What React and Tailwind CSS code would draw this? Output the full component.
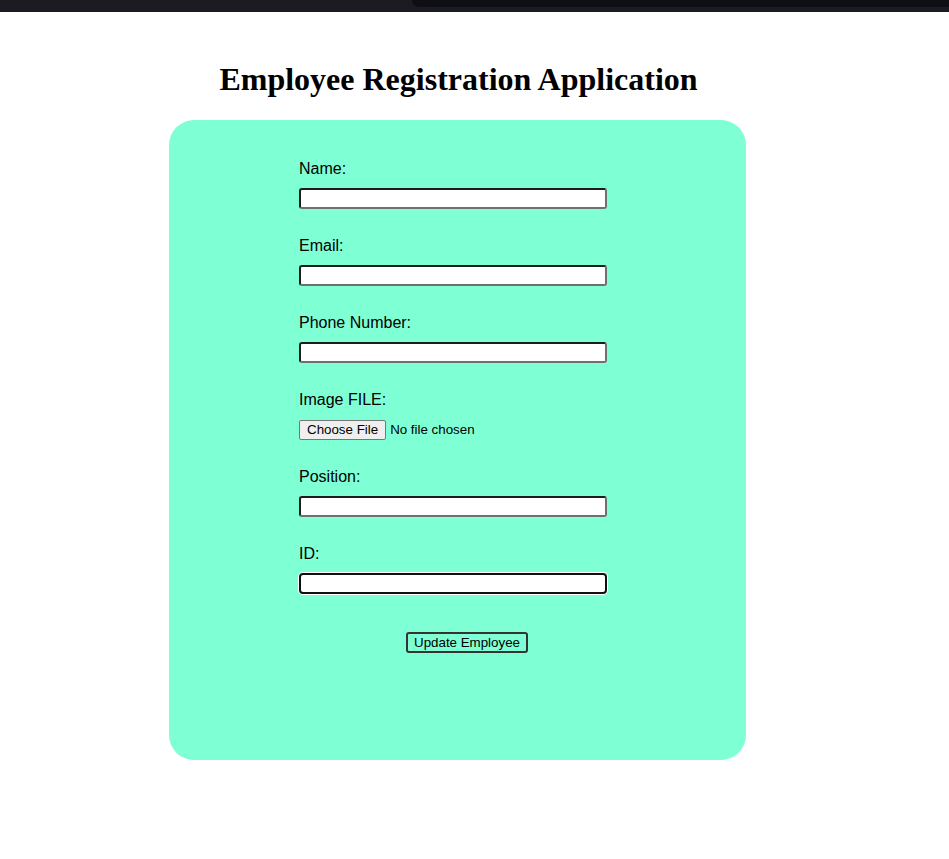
import React from 'react';

const inputBox =
  "block w-[308px] h-[21px] bg-white rounded-[3px] border-2 border-t-[#1d1d1d] border-l-[#1d1d1d] border-r-[#6f6f6f] border-b-[#6f6f6f]";

// single labelled row of the form
const Field = ({ label, children }) => (
  <div className="flex flex-col mb-[27px]">
    <label className="pt-[1px] text-[16px] leading-[18px] text-black">{label}</label>
    <div className="mt-[10px]">{children}</div>
  </div>
);

export default function App() {
  return (
    <div className="min-h-screen bg-white font-['Liberation_Sans',Arial,sans-serif]">
      {/* browser chrome strip */}
      <div className="flex h-3 bg-[#1c1b21]">
        <div className="w-[412px]"></div>
        <div className="flex-1 h-[7px] bg-[#0e0f13] rounded-bl-lg"></div>
      </div>

      <div className="ml-[169px] w-[577px]">
        <h1 className="mt-[49px] mb-[22px] pl-[2px] text-center font-['Liberation_Serif',serif] font-bold text-[32px] leading-[37px] text-black">
          Employee Registration Application
        </h1>

        <div className="h-[640px] rounded-[25px] bg-[#7fffd4] pt-[39px] pl-[130px]">
          <form className="flex flex-col" onSubmit={(e) => e.preventDefault()}>
            <Field label="Name:">
              <input type="text" className={inputBox} />
            </Field>
            <Field label="Email:">
              <input type="email" className={inputBox} />
            </Field>
            <Field label="Phone Number:">
              <input type="tel" className={inputBox} />
            </Field>
            <Field label="Image FILE:">
              <div className="flex items-center h-[21px] text-[13.33px] text-black">
                <span className="h-[20px] px-[7px] flex items-center bg-[#efefef] border border-[#767676] rounded-[2px]">
                  Choose File
                </span>
                <span className="ml-[4px]">No file chosen</span>
              </div>
            </Field>
            <Field label="Position:">
              <input type="text" className={inputBox} />
            </Field>
            <Field label="ID:">
              <input
                type="text"
                className="block w-[308px] h-[21px] bg-white rounded-[4px] border-2 border-[#101010] shadow-[0_0_0_1px_#ffffff] outline-none"
              />
            </Field>

            <div className="mt-[9px] ml-[107px]">
              <button
                type="submit"
                className="h-[21px] w-[122px] text-[13.33px] leading-none text-black bg-transparent border-2 border-[#333] rounded-[3px]"
              >
                Update Employee
              </button>
            </div>
          </form>
        </div>
      </div>
    </div>
  );
}
